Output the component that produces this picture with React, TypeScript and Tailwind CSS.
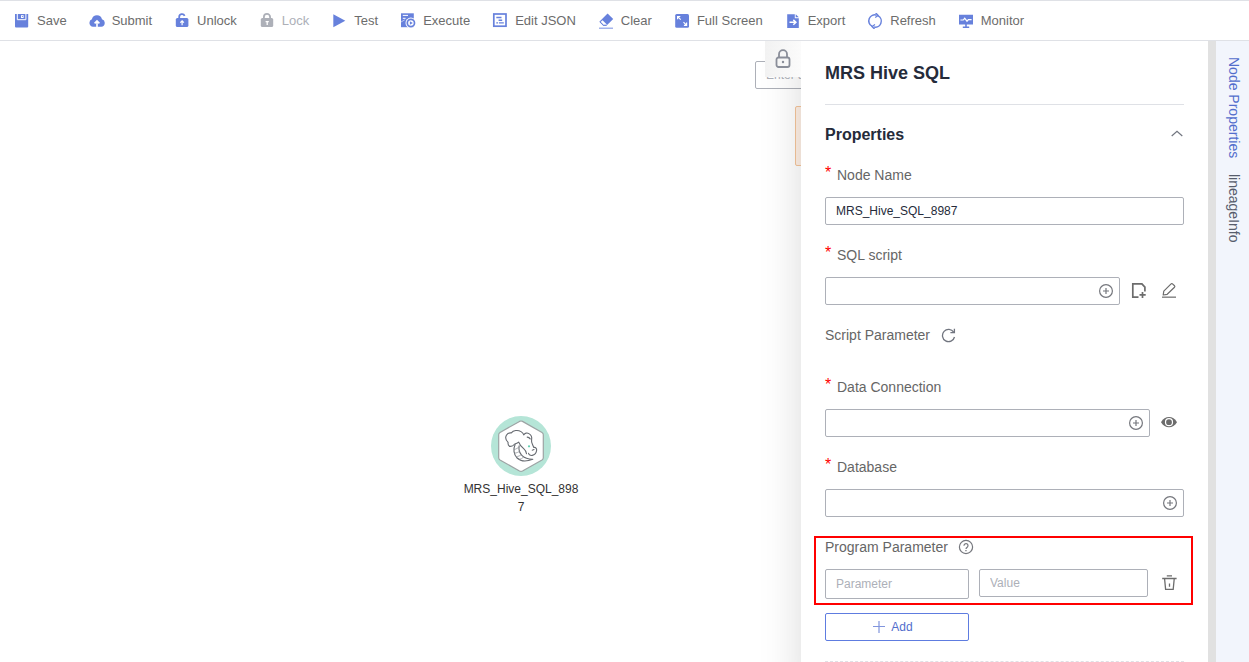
import type { ReactNode } from "react";

const BLUE = "#6781dc";

function Icon({ children, size = 16, label }: { children: ReactNode; size?: number; label?: string }) {
  return (
    <svg
      width={size}
      height={size}
      viewBox={`0 0 ${size} ${size}`}
      fill="none"
      aria-hidden={label ? undefined : true}
      aria-label={label}
      className="shrink-0"
    >
      {children}
    </svg>
  );
}

const toolbar: { label: string; icon: ReactNode; disabled?: boolean }[] = [
  {
    label: "Save",
    icon: (
      <>
        <path d="M1 1h13.200v12.500a1 1 0 0 1-1 1H2a1 1 0 0 1-1-1z" fill={BLUE} />
        <path d="M3.300 1v5.700h8.600V1" stroke="#fff" strokeWidth="1" />
        <path d="M7 2.200h2.600v2.800H7z" fill="#fff" />
        <path d="M7.900 3h.9v1.100h-.9z" fill={BLUE} />
      </>
    ),
  },
  {
    label: "Submit",
    icon: (
      <>
        <path d="M4 13.800a3.900 3.900 0 0 1-1.100-7.500A5.200 5.200 0 0 1 13 6.200a3.900 3.900 0 0 1-.7 7.600z" fill={BLUE} />
        <path d="M8 14V8.500M5.600 10.400 8 7.900l2.400 2.500" stroke="#fff" strokeWidth="1.600" />
      </>
    ),
  },
  {
    label: "Unlock",
    icon: (
      <>
        <rect x="1.800" y="5" width="12.600" height="9" rx="1.600" fill={BLUE} />
        <path d="M5.200 5.500V4a2.800 2.800 0 0 1 5.400-1.100" stroke={BLUE} strokeWidth="1.800" />
        <path d="M8.100 12.200V8M6.300 9.700l1.800-1.800 1.800 1.800" stroke="#fff" strokeWidth="1.200" />
      </>
    ),
  },
  {
    label: "Lock",
    disabled: true,
    icon: (
      <>
        <rect x="1.800" y="5" width="12.400" height="9" rx="1.600" fill="#adb0b8" />
        <path d="M4.900 5.500V4a3.100 3.100 0 0 1 6.200 0v1.500" stroke="#adb0b8" strokeWidth="1.800" />
        <path d="M8.200 12V8.200M6.600 8.600h3.200" stroke="#fff" strokeWidth="1.300" />
      </>
    ),
  },
  { label: "Test", icon: <path d="M2.300 1.200 14.300 7.700 2.300 14.300z" fill={BLUE} /> },
  {
    label: "Execute",
    icon: (
      <>
        <path d="M1 .3h12.800v13.900H1z" fill={BLUE} />
        <path d="M2.800 2.400h5.200M2.800 5.300h2.800" stroke="#fff" strokeWidth="1" />
        <path d="M1 9 4.800 6.800" stroke="#fff" strokeWidth=".8" opacity=".7" />
        <circle cx="10.900" cy="10" r="5.400" fill="#fff" />
        <circle cx="10.900" cy="10" r="3.600" stroke={BLUE} strokeWidth="1.700" />
        <path d="m9.900 8.200 2.900 1.800-2.900 1.800z" fill={BLUE} />
      </>
    ),
  },
  {
    label: "Edit JSON",
    icon: (
      <>
        <rect x="1.800" y="1" width="12.200" height="12.200" stroke={BLUE} strokeWidth="1.700" />
        <path d="M4.300 4.500h5.200M6.600 7.200h3.600M4.300 9.900h1.800M7 9.900h4.800" stroke={BLUE} strokeWidth="1.400" />
      </>
    ),
  },
  {
    label: "Clear",
    icon: (
      <>
        <path d="M9.600.4 15.200 5.900 8.400 12.700H5.200L1.300 8.800z" fill={BLUE} />
        <path d="m4.600 7.200 4.200 4.200-.6.600H5.500L2.500 9z" fill="#fff" />
        <path d="m2.100 8.900 3.400 3.300h2.900" stroke={BLUE} strokeWidth="1" />
        <path d="M1 15.200h14" stroke="#8da1e6" strokeWidth="1.200" />
      </>
    ),
  },
  {
    label: "Full Screen",
    icon: (
      <>
        <rect x="1.200" y="1" width="13.800" height="13.700" rx="1.500" fill={BLUE} />
        <path d="M3.600 6.200V3.500h2.700M3.800 3.700l2.900 2.900M12.600 9.600v2.700H9.900M12.400 12.100 9.500 9.200" stroke="#fff" strokeWidth="1.200" />
      </>
    ),
  },
  {
    label: "Export",
    icon: (
      <>
        <path d="M2.200 1.200h7.600v4h4V15H2.200z" fill={BLUE} />
        <path d="m10.700 1.200 3.100 3.100h-3.100z" fill={BLUE} />
        <path d="M4.500 9.300h5.800M8.300 6.900l2.600 2.400-2.600 2.400" stroke="#fff" strokeWidth="1.500" />
      </>
    ),
  },
  {
    label: "Refresh",
    icon: (
      <>
        <path d="M5 13.200A6 6 0 0 1 9.700 2.200M11.200 2.900A6 6 0 0 1 6.600 13.900" stroke={BLUE} strokeWidth="1.500" />
        <path d="m8.600-.2 2.600 2.700-3 2M7.600 16.200 5 13.500l3-2" stroke={BLUE} strokeWidth="1.300" />
      </>
    ),
  },
  {
    label: "Monitor",
    icon: (
      <>
        <path d="M1 1.700h14v9.800H1zM7.200 11.500h1.600v2.300H7.200zM4.800 13.600h6.400v1.300H4.800z" fill={BLUE} />
        <path d="M2.400 7h2.900l1.400-1.800 2.300 3L10.400 6.600h3.200" stroke="#fff" strokeWidth="1.200" />
      </>
    ),
  },
];

function NodeLogo() {
  return (
    <svg width="60" height="60" viewBox="0 0 60 60" fill="none" aria-hidden="true">
      <circle cx="30" cy="30" r="30" fill="#b5e5d7" />
      <path d="M28.500 5.400 9 16.400q-1.300.8-1.300 2.300v23q0 1.500 1.300 2.300l19.500 11q1.500.8 3 0l19.500-11q1.300-.8 1.300-2.300v-23q0-1.500-1.300-2.300l-19.500-11q-1.500-.8-3 0z" fill="#fff" stroke="#9da3a4" strokeWidth="1.200" />
      <g stroke="#666a70" strokeWidth="1.100" strokeLinecap="round" strokeLinejoin="round">
        <path d="M18.500 30.300c-1.200-1-1.700-2.500-1.400-4-2-1.800-3-4.700-1.700-7.100 1-1.800 2.900-2.600 4.900-2.300 2-2.600 6.500-3.300 9.700-1.300 1.400.9 2.300 2 2.800 3.100" />
        <path d="M18.500 30.300c2.300.5 3.900-.7 5.200-2.300 1.600-.2 2.900-.8 4-1.800.8 2.600 2.600 4.500 5.200 6.700 1.600 1.400 2.400 2.800 2.600 4.800" />
        <path d="M32.800 18.700c1-1.700 3.300-2.200 5.100-1.100 2.300 1.400 3.200 3.700 2.700 6-.3 1.800 0 3.200.9 4.900l1.300 3c1.800-.5 3.200 1 2.800 3.100-.5 2.500-2 4.300-4.300 4.800-1.900.4-3.500-.5-3.800-2.200" />
        <path d="M36.200 21.100c1.400 0 2.300.6 3 1.800M41.200 34.200l1.800-.6" />
        <path d="M24.100 28.500c-2 4.400-1.500 10.100 2 13.500 4 3.800 9.600 3.600 15.700 1.200-4.200.1-7.800-.9-10.700-3.600-2.600-2.500-3.500-6-3-9.900" />
      </g>
      <g stroke="#92959a" strokeWidth=".8" strokeLinecap="round">
        <path d="M23.300 33.500c2-.5 3.400-1.300 4.600-2.500M23.800 37.200c2-.3 3.700-1 4.900-2.100M25.500 40.600c1.900-.2 3.500-.8 4.700-1.900M28.700 43.300c1.400-.3 2.600-.9 3.400-1.800" />
      </g>
      <circle cx="38" cy="30.300" r="1.100" fill="#5fceb0" />
    </svg>
  );
}

function PlusCircle() {
  return (
    <Icon>
      <circle cx="8" cy="8" r="6.400" stroke="#75777d" strokeWidth="1.200" />
      <path d="M8 5v6M5 8h6" stroke="#75777d" strokeWidth="1.200" />
    </Icon>
  );
}

function FieldLabel({ id, children }: { id: string; children: ReactNode }) {
  return (
    <label htmlFor={id} className="flex h-5 items-center gap-1.5 text-sm leading-5 text-[#666]">
      <span className="w-1.5 self-start text-base leading-4 text-[#f00]">*</span>
      {children}
    </label>
  );
}

const inputClass =
  "h-7 w-full rounded-xs border border-[#adb0b8] bg-white px-2.5 text-xs text-[#252b3a] outline-none placeholder:text-[#adb0b8]";

function Picker({ id, name }: { id: string; name: string }) {
  return (
    <div className="relative min-w-0 flex-1">
      <input id={id} type="text" className={inputClass} />
      <button type="button" aria-label={`Select ${name}`} className="absolute top-1.5 right-1.5">
        <PlusCircle />
      </button>
    </div>
  );
}

export default function App() {
  return (
    <div className="flex h-screen flex-col overflow-hidden bg-white font-['Liberation_Sans',Arial,sans-serif] text-[#252b3a]">
      <header className="relative z-10 flex h-[41px] shrink-0 items-center gap-[22px] border-y border-[#dfe1e6] bg-white px-3.5">
        {toolbar.map((item) => (
          <button
            key={item.label}
            type="button"
            disabled={item.disabled}
            className="flex shrink-0 items-center gap-[7px] text-[13px] leading-5 text-[#6c6c6c] disabled:text-[#adb0b8]"
          >
            <Icon>{item.icon}</Icon>
            {item.label}
          </button>
        ))}
      </header>

      <div className="flex min-h-0 flex-1">
        <main className="relative min-w-0 flex-1">
          <input
            type="text"
            aria-label="Search"
            placeholder="Enter a node name"
            className="absolute top-5 -right-36 h-7 w-[190px] rounded-xs border border-[#adb0b8] px-2.5 text-xs placeholder:text-[#adb0b8]"
          />
          <div className="absolute top-[65px] -right-36 h-[60px] w-[150px] rounded-xs border border-[#f5c59b] bg-[#fff0e6]" />
          <div className="absolute top-[375px] left-[461px] flex w-[120px] flex-col items-center gap-1">
            <NodeLogo />
            <span className="w-full text-center text-xs leading-[18px] break-all text-[#333]">MRS_Hive_SQL_8987</span>
          </div>
        </main>

        <aside className="relative -mb-10 w-[407px] shrink-0 bg-white px-6 pt-5 shadow-[0_0_40px_rgba(0,0,0,0.15)]">
          <button
            type="button"
            aria-label="Pin panel"
            className="absolute top-0 -left-9 flex size-9 items-center justify-center bg-linear-to-r from-[#f2f2f2] to-[#fbfbfb]"
          >
            <Icon size={20}>
              <rect x="3.500" y="8.500" width="13" height="9.500" rx="2" stroke="#8a8e99" strokeWidth="1.800" />
              <path d="M6 8.500V5.200a4 4 0 0 1 8 0v3.300" stroke="#8a8e99" strokeWidth="1.800" />
              <circle cx="10" cy="13" r="1.200" fill="#8a8e99" />
            </Icon>
          </button>

          <h1 className="border-b border-[#dfe1e6] pb-[19px] text-lg leading-6 font-bold">MRS Hive SQL</h1>

          <div className="mt-[18px] flex h-6 items-center justify-between">
            <h2 className="text-base leading-6 font-bold">Properties</h2>
            <button type="button" aria-label="Collapse Properties">
              <Icon>
                <path d="m3.700 9 5.300-4.700L14.300 9" stroke="#71757f" strokeWidth="1.200" />
              </Icon>
            </button>
          </div>

          <form className="mt-[18px]" onSubmit={(e) => e.preventDefault()}>
            <div className="mb-5 flex flex-col gap-3">
              <FieldLabel id="node-name">Node Name</FieldLabel>
              <input id="node-name" type="text" defaultValue="MRS_Hive_SQL_8987" className={inputClass} />
            </div>

            <div className="mb-5 flex flex-col gap-3">
              <FieldLabel id="sql-script">SQL script</FieldLabel>
              <div className="flex items-center pr-[7px]">
                <Picker id="sql-script" name="SQL script" />
                <button type="button" aria-label="New script" className="ml-[11px]">
                  <Icon>
                    <path d="M7.500 14.200H1.800V.9h9.100l3 3.200v4.400" stroke="#6c6c6c" strokeWidth="1.700" />
                    <path d="M11.500 8.900v6M8.500 11.900h6.200" stroke="#6c6c6c" strokeWidth="1.700" />
                  </Icon>
                </button>
                <button type="button" aria-label="Edit script" className="ml-3.5">
                  <Icon>
                    <path d="M2.800 8.100 10.100.900q.7-.6 1.400 0l2 1.900q.6.700 0 1.400l-7.300 7.100-4 .7z" stroke="#6c6c6c" strokeWidth="1.200" strokeLinejoin="round" />
                    <path d="M1 14.200h14" stroke="#888" strokeWidth="1.500" />
                  </Icon>
                </button>
              </div>
            </div>

            <div className="mb-8 flex h-5 items-center gap-2.5 text-sm text-[#666]">
              Script Parameter
              <button type="button" aria-label="Refresh script parameters">
                <Icon>
                  <path d="M13.700 5.200A6.100 6.100 0 1 0 14.500 10" stroke="#71757f" strokeWidth="1.300" />
                  <path d="M14.400 1.800v3.900h-4" stroke="#71757f" strokeWidth="1.300" />
                </Icon>
              </button>
            </div>

            <div className="mb-5 flex flex-col gap-3">
              <FieldLabel id="data-connection">Data Connection</FieldLabel>
              <div className="flex items-center pr-[7px]">
                <Picker id="data-connection" name="data connection" />
                <button type="button" aria-label="View connection" className="ml-[11px]">
                  <Icon>
                    <path d="M0 7.200C2 3.700 4.800 2.100 8 2.100s6 1.600 8 5.100c-2 3.500-4.800 5.100-8 5.100S2 10.700 0 7.200z" fill="#6c6c6c" />
                    <circle cx="8" cy="7.200" r="3.500" stroke="#fff" strokeWidth="1.200" />
                  </Icon>
                </button>
              </div>
            </div>

            <div className="mb-5 flex flex-col gap-3">
              <FieldLabel id="database">Database</FieldLabel>
              <Picker id="database" name="database" />
            </div>

            <div className="relative">
              <div className="pointer-events-none absolute -top-px -right-[9px] -bottom-1.5 -left-[11px] border-2 border-[#f00]" />
              <div className="flex h-5 items-center gap-2.5 text-sm text-[#666]">
                Program Parameter
                <button type="button" aria-label="Program parameter help">
                  <Icon>
                    <circle cx="8" cy="8" r="6.600" stroke="#75777d" strokeWidth="1.200" />
                    <path d="M6 6.700a2 2 0 1 1 3.200 1.500c-.8.600-1.200 1-1.200 1.800" stroke="#75777d" strokeWidth="1.200" />
                    <path d="M7.300 11h1.300v1.200H7.300z" fill="#75777d" />
                  </Icon>
                </button>
              </div>
              <div className="mt-3 flex items-start pr-[7px]">
                <input
                  type="text"
                  aria-label="Parameter"
                  placeholder="Parameter"
                  className="h-[30px] w-36 rounded-xs border border-[#adb0b8] px-2.5 text-xs outline-none placeholder:text-[#adb0b8]"
                />
                <div className="ml-2.5 min-w-0 flex-1">
                  <input type="text" aria-label="Value" placeholder="Value" className={inputClass} />
                </div>
                <button type="button" aria-label="Delete parameter" className="mt-1.5 ml-[13px]">
                  <Icon>
                    <path d="M1.200 3.500h14.400M5.800.9h5.200M3.600 4l1 10.300h7.600l1-10.300M8.500 8.500v3.200" stroke="#6c6c6c" strokeWidth="1.300" />
                  </Icon>
                </button>
              </div>
            </div>

            <button
              type="button"
              className="mt-3.5 flex h-7 w-36 items-center justify-center gap-1.5 rounded-xs border border-[#5e7ce0] pr-2 text-xs text-[#526ecc]"
            >
              <Icon size={12}>
                <path d="M6 0v12M0 5.500h12" stroke="#8195dd" strokeWidth="1.200" />
              </Icon>
              Add
            </button>
            <hr className="mt-5 border-dashed border-[#dfe1e6]" />
          </form>
        </aside>

        <div className="relative w-2 shrink-0 bg-[#e1e1e1]" />
        <nav className="relative flex w-[33px] shrink-0 flex-col items-center gap-4 bg-[#f2f5fc] pt-4 pl-0.5 text-sm leading-5">
          <a href="#node-properties" className="text-[#526ecc] [writing-mode:vertical-rl]">
            Node Properties
          </a>
          <a href="#lineage-info" className="text-[#575d6c] [writing-mode:vertical-rl]">
            lineageInfo
          </a>
        </nav>
      </div>
    </div>
  );
}
